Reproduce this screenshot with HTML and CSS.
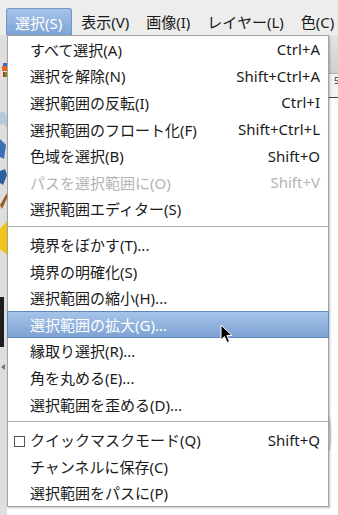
FILE: index.html
```html
<!DOCTYPE html>
<html lang="ja">
<head>
    <meta charset="UTF-8">
    <meta name="viewport" content="width=device-width, initial-scale=1.0">
    <title>選択メニュー</title>
    <link rel="stylesheet" href="styles.css">
</head>
<body>
<div class="screen">
    <div class="menubar">
        <span class="mb-item active">選択(S)</span>
        <span class="mb-item">表示(V)</span>
        <span class="mb-item">画像(I)</span>
        <span class="mb-item">レイヤー(L)</span>
        <span class="mb-item">色(C)</span>
    </div>

    <div class="workspace">
        <div class="toolbox">
            <svg width="7" height="472" viewBox="0 0 7 472">
                <rect x="3" y="28" width="4" height="4" fill="#3a6fc2"/>
                <rect x="2" y="31" width="5" height="5" fill="#e8641e"/>
                <rect x="3" y="37" width="2" height="5" fill="#d62b1f"/>
                <rect x="5" y="37" width="2" height="5" fill="#5aa52a"/>
                <path d="M0 78 Q6 74 7 84 L7 92 Q3 88 0 90 Z" fill="#b8c9dc"/>
                <path d="M0 104 L6 110 L4 124 L0 122 Z" fill="#3c6fb6"/>
                <path d="M0 136 L5 134 L7 140 L3 150 L0 148 Z" fill="#2f5e9e"/>
                <path d="M0 170 L7 158 L7 163 L2 174 Z" fill="#9a5a22"/>
                <path d="M0 194 L7 186 L7 220 L0 214 Z" fill="#f0c419"/>
                <rect x="0" y="262" width="4" height="50" fill="#1e1e1e"/>
                <path d="M1 332 L5 329 L5 335 Z" fill="#777"/>
            </svg>
        </div>
        <div class="canvas">
            <div class="toolbar"></div>
            <div class="ruler"><span class="ruler-num">5</span></div>
            <svg class="sketch" width="20" height="440" viewBox="0 0 20 440">
                <path d="M4 220 Q10 240 6 262 T9 300" stroke="#c8c8c8" stroke-width="2" fill="none"/>
                <path d="M8 330 Q14 350 10 372" stroke="#cfcfcf" stroke-width="2" fill="none"/>
                <path d="M2 390 L9 405" stroke="#d5d5d5" stroke-width="1.5" fill="none"/>
            </svg>
        </div>
    </div>

    <div class="menu">
        <div class="item"><span>すべて選択(A)</span><span class="key">Ctrl+A</span></div>
        <div class="item"><span>選択を解除(N)</span><span class="key">Shift+Ctrl+A</span></div>
        <div class="item"><span>選択範囲の反転(I)</span><span class="key">Ctrl+I</span></div>
        <div class="item"><span>選択範囲のフロート化(F)</span><span class="key">Shift+Ctrl+L</span></div>
        <div class="item"><span>色域を選択(B)</span><span class="key">Shift+O</span></div>
        <div class="item disabled"><span>パスを選択範囲に(O)</span><span class="key">Shift+V</span></div>
        <div class="item"><span>選択範囲エディター(S)</span></div>
        <div class="separator"></div>
        <div class="item"><span>境界をぼかす(T)...</span></div>
        <div class="item"><span>境界の明確化(S)</span></div>
        <div class="item"><span>選択範囲の縮小(H)...</span></div>
        <div class="item hover"><span>選択範囲の拡大(G)...</span></div>
        <div class="item"><span>縁取り選択(R)...</span></div>
        <div class="item"><span>角を丸める(E)...</span></div>
        <div class="item"><span>選択範囲を歪める(D)...</span></div>
        <div class="separator"></div>
        <div class="item"><span><span class="check"></span>クイックマスクモード(Q)</span><span class="key">Shift+Q</span></div>
        <div class="item"><span>チャンネルに保存(C)</span></div>
        <div class="item"><span>選択範囲をパスに(P)</span></div>
    </div>

    <svg class="cursor" width="13" height="20" viewBox="0 0 13 20">
        <path d="M1 1 L1 16 L4.5 12.5 L7 18.5 L9.5 17.5 L7 11.5 L12 11.5 Z" fill="#000" stroke="#fff" stroke-width="1"/>
    </svg>
</div>
</body>
</html>
```

FILE: styles.css
```css
body {
    margin: 0;
    font-family: "Noto Sans", "Noto Sans CJK JP", sans-serif;
    font-size: 15px;
    color: #1a1a1a;
}
.screen {
    position: relative;
    width: 338px;
    height: 515px;
    overflow: hidden;
    background: #ededec;
}
.menubar {
    display: flex;
    height: 35px;
    padding: 8px 0 0 6px;
    box-sizing: border-box;
    background: #ededec;
}
.mb-item {
    display: flex;
    align-items: center;
    padding: 0 8px 0 9px;
    height: 27px;
    white-space: nowrap;
}
.mb-item.active {
    color: white;
    background: linear-gradient(#a6c3e8, #7da3d5);
    border: 1px solid #7196c9;
    border-bottom: none;
    border-radius: 3px 3px 0 0;
    box-sizing: border-box;
    padding: 0 9px 0 8px;
}
.workspace {
    display: flex;
    height: 480px;
}
.toolbox {
    width: 7px;
    background: #dedede;
}
.canvas {
    flex: 1;
    display: flex;
    flex-direction: column;
    background: white;
}
.toolbar {
    height: 40px;
    background: linear-gradient(#e4e4e4, #cfcfcf);
    border-bottom: 1px solid #b4b4b4;
}
.ruler {
    height: 24px;
    background: #f3f3f3;
    border-bottom: 1px solid #444;
    font-size: 9px;
    padding-left: 327px;
}
.ruler-num {
    color: #333;
}
.sketch {
    align-self: flex-end;
}
.menu {
    position: absolute;
    left: 7px;
    top: 35px;
    width: 322px;
    box-sizing: border-box;
    background: white;
    border: 1px solid #a3a3a3;
    box-shadow: 1px 1px 2px rgba(0, 0, 0, 0.25);
}
.item {
    display: flex;
    justify-content: space-between;
    align-items: center;
    height: 26.6px;
    padding: 0 8px 0 22px;
    white-space: nowrap;
}
.item.disabled {
    color: #b4b4b4;
}
.item.hover {
    color: white;
    background: linear-gradient(#a8c5ea, #7ba1d3);
    outline: 1px solid #5f88be;
    outline-offset: -1px;
    margin: 0 -1px;
    padding: 0 9px 0 23px;
}
.key {
    margin-left: 20px;
}
.separator {
    height: 1px;
    background: #ababab;
    margin: 4px 0;
}
.check {
    display: inline-block;
    width: 11px;
    height: 11px;
    box-sizing: border-box;
    border: 1px solid #555;
    margin: 0 5px 0 -16px;
    vertical-align: -1px;
}
.cursor {
    position: absolute;
    left: 220px;
    top: 324px;
}
```
